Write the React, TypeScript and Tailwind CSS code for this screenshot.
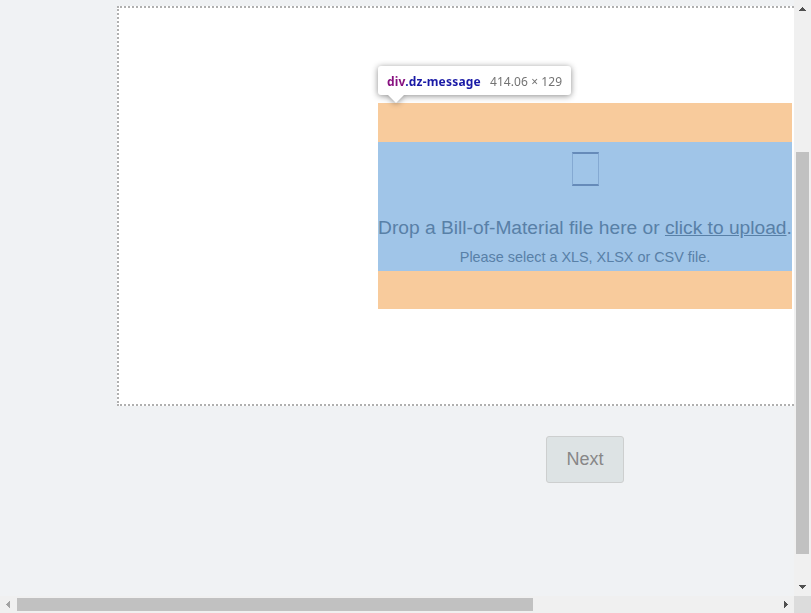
function Tooltip() {
  return (
    <div className="absolute left-[378px] top-[66px] h-[37px] w-[193px] drop-shadow-[0_1px_3px_rgba(0,0,0,0.45)]">
      <div className="flex h-[29px] w-[193px] items-center whitespace-nowrap rounded-[3px] bg-white pl-[9px] pt-[2px] font-['Noto_Sans','Open_Sans',sans-serif] text-[12px] leading-4">
        <span className="w-[103px] font-bold tracking-[0.2px] text-[#1a1aa6]">
          <span className="text-[#881280]">div</span>.dz-message
        </span>
        <span className="tracking-[0.07px] text-[#737373]">414.06 × 129</span>
      </div>
      <svg className="ml-[10px] block" width="16" height="8" viewBox="0 0 16 8">
        <path d="M0 0H16L8 8Z" fill="#fff" />
      </svg>
    </div>
  );
}

function UploadMessage() {
  return (
    <div className="w-[414px] bg-[#f8cb9c] pb-[38px] pt-[39px]">
      <div className="flex h-[129px] flex-col items-center whitespace-nowrap bg-[#a0c5e8] pt-[10px] text-[#5880a7]">
        <div className="h-[34px] w-[27px] border-x border-y-2 border-x-[#84a9d2] border-y-[#668bb9]" />
        <div className="mt-[28px] text-[19.2px] leading-[27px]">
          Drop a Bill-of-Material file here or <span className="underline">click to upload</span>.
        </div>
        <div className="mt-[6px] text-[14.4px] leading-[20px]">Please select a XLS, XLSX or CSV file.</div>
      </div>
    </div>
  );
}

export default function App() {
  return (
    <div className="relative grid h-[613px] w-[811px] grid-cols-[794px_17px] grid-rows-[596px_17px] overflow-hidden bg-[#f0f2f4] font-['Liberation_Sans',Arial,sans-serif]">
      <main className="overflow-hidden pl-[117px] pt-[6px]">
        <div className="flex w-[936px] flex-col items-center">
          <section className="flex h-[400px] w-full justify-center border-2 border-dotted border-[#b0b0b0] bg-white pt-[95px]">
            <div>
              <UploadMessage />
            </div>
          </section>
          <button className="mt-[30px] h-[47px] w-[78px] rounded-[3px] border border-[#cdcfcf] bg-[#dde3e4] text-[18px] text-[#878787]">
            Next
          </button>
        </div>
      </main>
      <div className="flex flex-col items-center bg-[#f0f0f0]">
        <svg width="17" height="17" viewBox="0 0 17 17" shapeRendering="crispEdges">
          <path d="M8 7h1v1h1v1h1v1h1v1H5v-1h1V9h1V8h1z" fill="#505050" />
        </svg>
        <div className="mt-[135px] h-[402px] w-[13px] bg-[#c1c1c1]" />
        <svg className="mt-auto" width="17" height="17" viewBox="0 0 17 17" shapeRendering="crispEdges">
          <path d="M5 6h7v1h-1v1h-1v1H9v1H8V9H7V8H6V7H5z" fill="#505050" />
        </svg>
      </div>
      <div className="flex items-center bg-[#f0f0f0]">
        <svg width="17" height="17" viewBox="0 0 17 17" shapeRendering="crispEdges">
          <path d="M6 8h1V7h1V6h1V5h1v7H9v-1H8v-1H7V9H6z" fill="#a3a3a3" />
        </svg>
        <div className="h-[13px] w-[516px] bg-[#c1c1c1]" />
        <svg className="ml-auto" width="17" height="17" viewBox="0 0 17 17" shapeRendering="crispEdges">
          <path d="M7 5h1v1h1v1h1v1h1v1h-1v1H9v1H8v1H7z" fill="#505050" />
        </svg>
      </div>
      <div className="bg-[#dcdcdc]" />
      <Tooltip />
    </div>
  );
}
